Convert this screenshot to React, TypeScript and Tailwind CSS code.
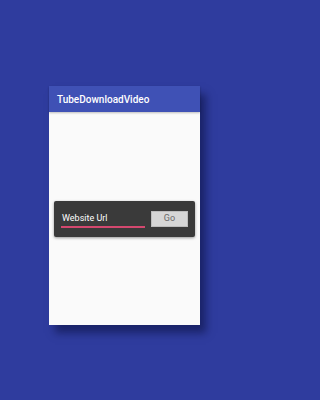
import React from "react";

export default function App() {
  return (
    <div
      className="w-full min-h-screen h-[400px] bg-[#2f3c9e] pl-[49px] pt-[86px]"
      style={{ fontFamily: "Roboto, 'Liberation Sans', sans-serif" }}
    >
      <div className="w-[151px] h-[239px] bg-[#fafafa] flex flex-col shadow-[6px_8px_8px_rgba(10,14,60,0.55)]">
        <div className="h-[26px] bg-[#3f51b5] flex items-center pl-2 shadow-[0_1px_2px_rgba(0,0,0,0.25)]">
          <span className="text-white text-[10px] font-medium">TubeDownloadVideo</span>
        </div>
        <div className="flex-1 flex items-center pl-[5px] pr-[5px]">
          <div className="w-full h-[36px] bg-[#3a3a3a] rounded-[2px] flex items-center pl-[7px] pr-[7px] gap-1 shadow-[0_1px_3px_rgba(0,0,0,0.4)]">
            <div className="flex-1 flex flex-col pt-[3px]">
              <span className="text-white text-[9px] leading-[12px] pl-px">Website Url</span>
              <div className="h-[1.5px] bg-[#d4486f] mt-[2px]" />
            </div>
            <div className="w-[37px] h-[16px] bg-[#d6d6d6] flex items-center justify-center ml-[2px] border border-[#bdbdbd]">
              <span className="text-[#6a6a6a] text-[9px]">Go</span>
            </div>
          </div>
        </div>
      </div>
    </div>
  );
}
